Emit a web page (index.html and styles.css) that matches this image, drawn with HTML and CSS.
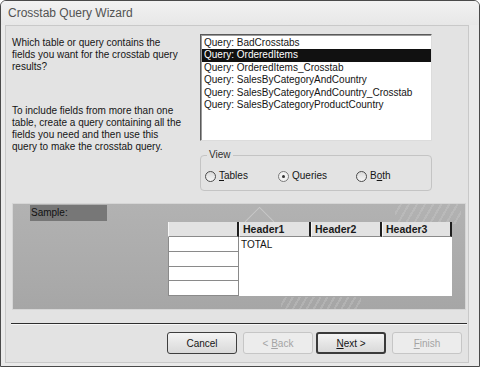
FILE: index.html
```html
<!DOCTYPE html>
<html lang="en">
<head>
    <meta charset="UTF-8">
    <title>Crosstab Query Wizard</title>
    <link rel="stylesheet" href="styles.css">
</head>
<body>
<div class="window">
    <div class="titlebar">Crosstab Query Wizard</div>
    <div class="client">
        <div class="top">
            <div class="intro">
                <p>Which table or query contains the<br>fields you want for the crosstab query<br>results?</p>
                <p>To include fields from more than one<br>table, create a query containing all the<br>fields you need and then use this<br>query to make the crosstab query.</p>
            </div>
            <div class="picker">
                <ul class="listbox">
                    <li>Query: BadCrosstabs</li>
                    <li class="selected">Query: OrderedItems</li>
                    <li>Query: OrderedItems_Crosstab</li>
                    <li>Query: SalesByCategoryAndCountry</li>
                    <li>Query: SalesByCategoryAndCountry_Crosstab</li>
                    <li>Query: SalesByCategoryProductCountry</li>
                </ul>
                <fieldset class="view-group">
                    <legend>View</legend>
                    <div class="radios">
                        <label class="radio"><span class="radio-box"></span><span><u>T</u>ables</span></label>
                        <label class="radio"><span class="radio-box checked"></span><span>Queries</span></label>
                        <label class="radio"><span class="radio-box"></span><span>B<u>o</u>th</span></label>
                    </div>
                </fieldset>
            </div>
        </div>

        <div class="sample">
            <div class="sample-label">Sample:</div>
            <div class="sample-grid">
                <div class="corner"></div>
                <div class="col-head">Header1</div>
                <div class="col-head">Header2</div>
                <div class="col-head">Header3</div>
                <div class="row-heads">
                    <div class="row-head"></div>
                    <div class="row-head"></div>
                    <div class="row-head"></div>
                    <div class="row-head"></div>
                </div>
                <div class="data">TOTAL</div>
            </div>
        </div>

        <div class="separator"></div>

        <div class="buttons">
            <button type="button" class="btn cancel">Cancel</button>
            <button type="button" class="btn back" disabled>&lt; <u>B</u>ack</button>
            <button type="button" class="btn next"><u>N</u>ext &gt;</button>
            <button type="button" class="btn" disabled><u>F</u>inish</button>
        </div>
    </div>
</div>
</body>
</html>
```

FILE: styles.css
```css
body {
    margin: 0;
    background-color: #ffffff;
    font-family: "Liberation Sans", Arial, sans-serif;
    font-size: 10px;
    color: #151515;
}

.window {
    width: 480px;
    height: 367px;
    box-sizing: border-box;
    border: 1px solid #4a4a4a;
    border-radius: 6px 6px 0 0;
    background-color: #eaeaea;
    display: flex;
    flex-direction: column;
}

.titlebar {
    height: 24px;
    line-height: 24px;
    padding-left: 7px;
    font-size: 12px;
    color: #525252;
    background: linear-gradient(#f2f2f2, #e7e7e7);
    border-radius: 5px 5px 0 0;
}

.client {
    flex: 1;
    margin: 0 10px 3px 4px;
    padding: 8px 2px 0 6px;
    border: 1px solid #c9c9c9;
    background-color: #e3e3e3;
}

/* upper part: explanation on the left, list + view on the right */
.top {
    display: grid;
    grid-template-columns: 188px 232px;
}

.intro {
    padding-top: 3px;
}

.intro p {
    margin: 0 0 32px 0;
    line-height: 12px;
    white-space: nowrap;
}

.listbox {
    list-style: none;
    margin: 0;
    height: 107px;
    box-sizing: border-box;
    padding: 2px 0 0 1px;
    background-color: #ffffff;
    border: 1px solid;
    border-color: #5a5a5a #dcdcdc #dcdcdc #5a5a5a;
    box-shadow: inset 1px 1px 0 #9a9a9a;
}

.listbox li {
    height: 12.4px;
    line-height: 12.4px;
    padding-left: 2px;
    white-space: nowrap;
}

.listbox li.selected {
    background-color: #111111;
    color: #ffffff;
}

.view-group {
    margin: 8px 0 0 0;
    padding: 0 4px 8px 4px;
    border: 1px solid #c4c4c4;
    border-radius: 4px;
    min-width: 0;
}

.view-group legend {
    margin-left: 2px;
    padding: 0 2px;
    line-height: 12px;
    color: #303030;
}

.radios {
    display: grid;
    grid-template-columns: 73px 78px auto;
    margin-top: 9px;
    height: 12px;
}

.radio {
    display: flex;
    align-items: center;
    gap: 3px;
    line-height: 12px;
}

.radio-box {
    width: 11px;
    height: 11px;
    box-sizing: border-box;
    border: 1px solid #4c4c4c;
    border-radius: 50%;
    background: linear-gradient(#dadada, #f6f6f6);
    display: flex;
    align-items: center;
    justify-content: center;
}

.radio-box.checked {
    border-color: #7a7a7a;
    background: #f2f2f2;
}

.radio-box.checked::after {
    content: "";
    width: 3px;
    height: 3px;
    border-radius: 50%;
    background-color: #333333;
}

/* sample preview */
.sample {
    position: relative;
    margin-top: 12px;
    height: 107px;
    box-sizing: border-box;
    padding: 1px 0 0 17px;
    border: 1px solid #d6d6d6;
    background:
        repeating-linear-gradient(-60deg, transparent 0 5px, rgba(255, 255, 255, 0.12) 5px 7px) right 4px top 0 / 66px 20px no-repeat,
        repeating-linear-gradient(-60deg, transparent 0 4px, rgba(255, 255, 255, 0.14) 4px 6px) 268px bottom / 80px 12px no-repeat,
        linear-gradient(to bottom, #b2b2b2, #aaaaaa 70%, #a6a6a6);
    overflow: hidden;
}

/* faint chevron behind the header row */
.sample::before {
    content: "";
    position: absolute;
    left: 236px;
    top: 7px;
    width: 20px;
    height: 20px;
    border-top: 1px solid rgba(255, 255, 255, 0.3);
    border-left: 1px solid rgba(255, 255, 255, 0.3);
    transform: rotate(45deg);
}

.sample-label {
    position: relative;
    width: 76px;
    height: 16px;
    line-height: 16px;
    padding-left: 1px;
    background-color: #777777;
    color: #111111;
}

.sample-grid {
    position: relative;
    display: grid;
    grid-template-columns: 71px 72px 71px 70px;
    grid-template-rows: 15px 59px;
    margin: 1px 0 0 138px;
    width: 284px;
}

.corner,
.col-head {
    box-sizing: border-box;
    background-color: #e2e2e2;
    border-bottom: 1px solid #8a8a8a;
    border-right: 2px solid #1e1e1e;
    border-left: 1px solid #f6f6f6;
}

.col-head {
    padding-left: 3px;
    line-height: 14px;
    font-weight: bold;
    font-size: 10.5px;
    color: #1a1a1a;
}

.row-heads {
    display: flex;
    flex-direction: column;
    background-color: #ffffff;
    border-left: 1px solid #8a8a8a;
    border-right: 1px solid #8a8a8a;
}

.row-head {
    flex: 1;
    border-bottom: 1px solid #8a8a8a;
}

.data {
    grid-column: span 3;
    background-color: #ffffff;
    padding: 2px 0 0 2px;
    line-height: 12px;
}

.separator {
    margin: 13px -1px 0 -1px;
    border-top: 1px solid #2e2e2e;
    border-bottom: 1px solid #f7f7f7;
}

.buttons {
    display: flex;
    justify-content: flex-end;
    margin: 7px 4px 0 0;
}

.btn {
    width: 70px;
    height: 22px;
    padding: 0;
    font-family: inherit;
    font-size: 10px;
    color: #151515;
    border: 1px solid #6e6e6e;
    border-radius: 3px;
    background: linear-gradient(#f4f4f4, #e6e6e6 50%, #d9d9d9);
}

.btn.cancel {
    margin-right: 6px;
    border-color: #3e3e3e;
}

.btn.back {
    margin-right: 3px;
}

.btn.next {
    margin-right: 6px;
    border: 2px solid #3a3a3a;
}

.btn:disabled {
    color: #a4a4a4;
    border-color: #c6c6c6;
    background: #ececec;
}
```
